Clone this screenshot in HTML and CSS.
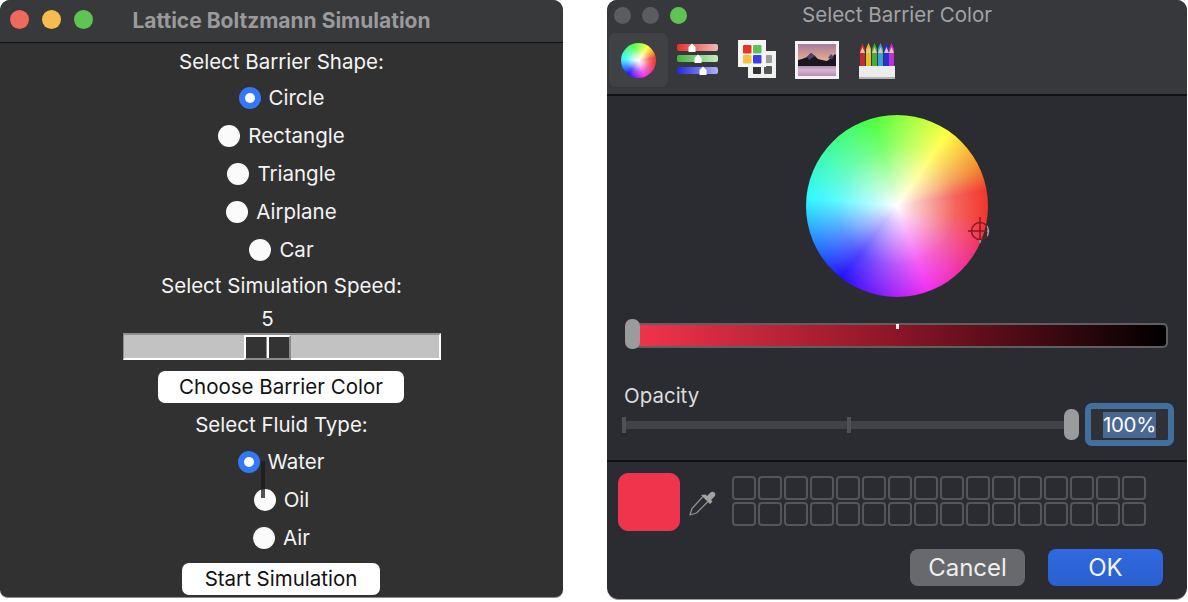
FILE: index.html
```html
<!DOCTYPE html>
<html lang="en">
<head>
<meta charset="utf-8">
<title>Lattice Boltzmann Simulation</title>
<link rel="stylesheet" href="styles.css">
</head>
<body>
<main class="desktop">
  <section class="window sim">
    <header class="sim-title">
      <div class="lights">
        <span class="light red"></span><span class="light yellow"></span><span class="light green"></span>
      </div>
      <h1>Lattice Boltzmann Simulation</h1>
    </header>
    <div class="sim-body">
      <p class="label row-a">Select Barrier Shape:</p>
      <div class="radio"><span class="dot on"></span><span>Circle</span></div>
      <div class="radio"><span class="dot"></span><span>Rectangle</span></div>
      <div class="radio"><span class="dot"></span><span>Triangle</span></div>
      <div class="radio"><span class="dot"></span><span>Airplane</span></div>
      <div class="radio"><span class="dot"></span><span>Car</span></div>
      <p class="label row-b">Select Simulation Speed:</p>
      <p class="value">5</p>
      <div class="scale"><div class="scale-thumb"><span></span><span></span></div></div>
      <button class="tk-btn wide">Choose Barrier Color</button>
      <p class="label row-c">Select Fluid Type:</p>
      <div class="fluid">
        <div class="radio"><span class="dot on"></span><span>Water</span></div>
        <div class="radio"><span class="dot"></span><span>Oil</span></div>
        <div class="radio"><span class="dot"></span><span>Air</span></div>
        <span class="stray"></span>
      </div>
      <button class="tk-btn start">Start Simulation</button>
    </div>
  </section>

  <section class="window picker">
    <header class="pick-head">
      <div class="pick-title">
        <div class="lights small">
          <span class="light gray"></span><span class="light gray"></span><span class="light green"></span>
        </div>
        <h2>Select Barrier Color</h2>
      </div>
      <div class="tools">
        <div class="tool selected"><span class="mini-wheel"></span></div>
        <svg class="ico ico-sliders" width="44" height="34" viewBox="0 0 44 34">
          <defs>
            <linearGradient id="gr" x1="0" x2="1"><stop offset="0" stop-color="#e5302a"/><stop offset="1" stop-color="#f1bcb8"/></linearGradient>
            <linearGradient id="gg" x1="0" x2="1"><stop offset="0" stop-color="#46b13f"/><stop offset="1" stop-color="#c6ecc2"/></linearGradient>
            <linearGradient id="gb" x1="0" x2="1"><stop offset="0" stop-color="#2228e0"/><stop offset="1" stop-color="#b0b3f5"/></linearGradient>
          </defs>
          <rect x="0" y="3" width="41" height="7" rx="2" fill="url(#gr)"/>
          <rect x="0" y="14" width="41" height="7" rx="2" fill="url(#gg)"/>
          <rect x="0" y="26" width="41" height="7" rx="2" fill="url(#gb)"/>
          <path d="M11.500 11V6l3.500-3.500L18.500 6v5zM17.500 22v-5l3.500-3.500 3.500 3.500v5zM22.500 34v-5l3.500-3.500 3.500 3.500v5z" fill="#fff"/>
        </svg>
        <svg class="ico ico-palette" width="40" height="40" viewBox="0 0 40 40">
          <rect x="10" y="12" width="28" height="27" fill="#f1f1f1"/>
          <rect x="26" y="16" width="8" height="8" rx="1" fill="#9c9c9c"/>
          <rect x="15" y="27" width="8" height="8" rx="1" fill="#333"/>
          <rect x="26" y="27" width="8" height="8" rx="1" fill="#555"/>
          <rect x="0" y="1" width="28" height="27" fill="#f6f6f6"/>
          <rect x="5" y="6" width="8.500" height="8.500" rx="1" fill="#ea3327"/>
          <rect x="15" y="6" width="8.500" height="8.500" rx="1" fill="#5cc253"/>
          <rect x="5" y="16" width="8.500" height="8.500" rx="1" fill="#f8c33a"/>
          <rect x="15" y="16" width="8.500" height="8.500" rx="1" fill="#3c3ee8"/>
        </svg>
        <svg class="ico ico-photo" width="44" height="38" viewBox="0 0 44 38">
          <defs>
            <linearGradient id="sky" x1="0" x2="0" y1="0" y2="1"><stop offset="0" stop-color="#a67a9f"/><stop offset="0.55" stop-color="#eab28d"/><stop offset="1" stop-color="#d5a08e"/></linearGradient>
            <linearGradient id="lake" x1="0" x2="0" y1="0" y2="1"><stop offset="0" stop-color="#9a7da4"/><stop offset="0.5" stop-color="#dab6d0"/><stop offset="1" stop-color="#b48fb6"/></linearGradient>
          </defs>
          <rect width="44" height="38" fill="#f3f3f3"/>
          <rect x="3" y="3" width="38" height="32" fill="url(#sky)"/>
          <rect x="3" y="23" width="38" height="12" fill="url(#lake)"/>
          <path d="M3 19l4-1 5-2 4-4 4 3 3 3 4 1 5 1 5-4 3-3 1 1v11H3z" fill="#1a1722"/>
          <path d="M12 16l4-4 4 3-3 2-3 2zM33 17l3-4 3 3-2 2z" fill="#4d4170"/>
        </svg>
        <svg class="ico ico-pencils" width="36" height="36" viewBox="0 0 36 36">
          <path d="M1 24V6l2.500-6L6 6v18z" fill="#c22f2c"/>
          <path d="M7 24V6l2.500-6L12 6v18z" fill="#e0c02c"/>
          <path d="M13 24V6l2.500-6L18 6v18z" fill="#43ad3c"/>
          <path d="M19 24V6l2.500-6L24 6v18z" fill="#3a9fe0"/>
          <path d="M25 24V6l2.500-6L30 6v18z" fill="#2430d8"/>
          <path d="M30 24V6l2.500-6L35 6v18z" fill="#c22fd0"/>
          <path d="M1 10l2.500-6L6 10zM7 10l2.500-6L12 10zM13 10l2.500-6L18 10zM19 10l2.500-6L24 10zM25 10l2.500-6L30 10zM30 10l2.500-6L35 10z" fill="#e3c7a6"/>
          <rect x="0" y="23" width="36" height="13" fill="#ececec"/>
          <rect x="0" y="34" width="36" height="2" fill="#b4b4b4"/>
        </svg>
      </div>
    </header>

    <div class="pick-main">
      <div class="wheel-wrap">
        <div class="wheel">
          <svg class="cross" width="26" height="28" viewBox="0 0 26 28">
            <defs><clipPath id="out"><rect x="19" y="0" width="7" height="28"/><rect x="0" y="23" width="26" height="5"/></clipPath></defs>
            <g fill="none" stroke="#8a1818" stroke-width="1.500">
              <circle cx="12" cy="14" r="8.500"/>
              <path d="M0 14h21M12 0v26"/>
            </g>
            <g fill="none" stroke="#a2a2a2" stroke-width="1.500" clip-path="url(#out)">
              <circle cx="12" cy="14" r="8.500"/>
              <path d="M0 14h21M12 0v26"/>
            </g>
          </svg>
        </div>
      </div>
      <div class="bright">
        <span class="knob bright-knob"></span>
        <span class="bright-mark"></span>
      </div>
      <p class="opacity-label">Opacity</p>
      <div class="opacity-row">
        <div class="opacity-track">
          <span class="tick t0"></span><span class="tick t1"></span>
          <span class="knob opacity-knob"></span>
        </div>
        <div class="opacity-field"><span class="selected-text">100%</span></div>
      </div>
    </div>

    <footer class="pick-foot">
      <div class="foot-top">
        <div class="swatch"></div>
        <svg class="dropper" width="30" height="30" viewBox="0 0 30 30">
          <path d="M15 9.500L4 21.500 2 28l6.500-2L20 14.500" fill="#2b2c31" stroke="#8f8f8f" stroke-width="1.300" stroke-linejoin="round"/>
          <path d="M13 8l9 9 2.500-2.500-1.500-1.500 3.500-3.500c2.500-2.500-1-6.500-4-4L19 9 17.500 7.500z" fill="#a2a2a2"/>
        </svg>
        <div class="wells" id="wells"></div>
      </div>
      <div class="actions">
        <button class="mac-btn cancel">Cancel</button>
        <button class="mac-btn ok">OK</button>
      </div>
    </footer>
  </section>
</main>
<script>
  var wells = document.getElementById('wells');
  for (var i = 0; i < 32; i++) {
    var w = document.createElement('span');
    w.className = 'well';
    wells.appendChild(w);
  }
</script>
</body>
</html>
```
FILE: styles.css
```css
* { box-sizing: border-box; }
html, body { margin: 0; padding: 0; background: #fff; }
body { font-family: Inter, "Liberation Sans", sans-serif; overflow: hidden; }
p, h1, h2 { margin: 0; }

.desktop { display: flex; align-items: flex-start; width: 1188px; height: 602px; gap: 44px; }
.window { overflow: hidden; flex: none; }

.lights { display: flex; gap: 13px; }
.light { width: 19px; height: 19px; border-radius: 50%; display: block; }
.light.red { background: #ee6a5f; }
.light.yellow { background: #f5bd4f; }
.light.green { background: #5fc454; }
.light.gray { background: #5c5c5f; }

/* Simulation window */
.sim {
  width: 563px; height: 598px; background: #313131; color: #f4f4f4;
  border-radius: 10px 10px 8px 8px; border-bottom: 1px solid #8c8c8c;
}
.sim-title {
  height: 43px; background: #38393b; border-bottom: 1px solid #0e0e0e;
  display: flex; align-items: center; justify-content: center; position: relative;
}
.sim-title .lights { position: absolute; left: 10px; top: 10px; }
.sim-title h1 { font-size: 21px; font-weight: 700; color: #9a9a9c; line-height: 24px; margin-top: -1px; }
.sim-body { display: flex; flex-direction: column; align-items: center; font-size: 20.5px; }
.label, .value, .radio { line-height: 24px; }
.row-a { margin-top: 7px; }
.radio { height: 38px; display: flex; align-items: center; gap: 8px; }
.sim-body > .radio:first-of-type { margin-top: 5px; }
.dot { width: 22px; height: 22px; border-radius: 50%; background: #fbfbfb; display: block; flex: none; }
.dot.on { background: #3478f6; position: relative; }
.dot.on::after { content: ""; position: absolute; left: 6px; top: 6px; width: 10px; height: 10px; border-radius: 50%; background: #fff; }
.row-b { margin-top: 5px; }
.value { margin-top: 9px; margin-left: -28px; }
.scale {
  width: 318px; height: 27px; margin-top: 2px; background: #c2c2c2; position: relative;
  border-top: 2px solid #8e8e8e; border-left: 1px solid #8e8e8e;
  border-right: 2px solid #fff; border-bottom: 2px solid #fff;
}
.scale-thumb {
  position: absolute; left: 120px; top: 0; width: 47px; height: 25px;
  display: flex; background: #8a8a8a;
  border-top: 2px solid #fff; border-left: 2px solid #fff; border-right: 2px solid #8a8a8a; border-bottom: 2px solid #8a8a8a;
}
.scale-thumb span { flex: 1; background: #333; }
.scale-thumb span:first-child { border-right: 1px solid #8a8a8a; }
.scale-thumb span:last-child { border-left: 2px solid #fff; }
.tk-btn {
  display: block; height: 32px; border: 0; border-radius: 7px; background: #fff; color: #111;
  font: inherit; font-size: 20.5px; padding: 0 0 2px; text-align: center;
}
.tk-btn.wide { width: 246px; margin-top: 11px; margin-left: -1px; }
.row-c { margin-top: 10px; }
.fluid { display: flex; flex-direction: column; align-items: center; margin-top: 6px; position: relative; }
.stray { position: absolute; left: 50%; top: 18px; width: 4px; height: 37px; margin-left: -20px; background: rgba(25,25,25,.75); }
.fluid .radio:nth-child(1) { margin-left: -1px; }
.tk-btn.start { width: 198px; margin-top: 6px; margin-left: -1px; }

/* Picker window */
.picker {
  width: 580px; height: 600px; background: #2b2c31; color: #e6e6e6;
  border-radius: 10px 10px 12px 12px; border-bottom: 1px solid #9a9a9a;
}
.pick-head { height: 96px; background: #37383c; border-bottom: 2px solid #111; }
.pick-title { height: 30px; display: flex; align-items: center; justify-content: center; position: relative; }
.lights.small { position: absolute; left: 7px; top: 7px; gap: 11px; }
.lights.small .light { width: 17px; height: 17px; }
.pick-title h2 { font-size: 20.5px; font-weight: 400; color: #a3a3a5; line-height: 24px; }
.tools { display: flex; align-items: flex-start; height: 56px; padding: 3px 0 0 2px; position: relative; }
.tool.selected { width: 59px; height: 54px; border-radius: 7px; background: #404145; display: flex; align-items: center; justify-content: center; }
.mini-wheel {
  width: 35px; height: 35px; border-radius: 50%; display: block;
  background:
    radial-gradient(circle, #fff 0%, rgba(255,255,255,.75) 18%, rgba(255,255,255,.28) 46%, rgba(255,255,255,0) 78%),
    conic-gradient(from 90deg, #f0281e 8deg, #f020f0 70deg, #1000ff 128deg, #20f8ff 185deg, #40ff30 255deg, #ffff30 305deg, #f08020 335deg, #f0281e 350deg);
}
.ico { position: absolute; }
.ico-sliders { left: 70px; top: 11px; }
.ico-palette { left: 131px; top: 9px; }
.ico-photo { left: 188px; top: 11px; }
.ico-pencils { left: 252px; top: 13px; }

.pick-main { height: 366px; border-bottom: 2px solid #111; padding-top: 1px; }
.wheel-wrap { display: flex; justify-content: center; margin-top: 18px; }
.wheel {
  width: 182px; height: 182px; border-radius: 50%; position: relative;
  background:
    radial-gradient(circle, #fff 0%, rgba(255,255,255,.75) 14%, rgba(255,255,255,.28) 46%, rgba(255,255,255,0) 78%),
    conic-gradient(from 90deg, #f0281e 8deg, #f020f0 70deg, #1000ff 128deg, #20f8ff 185deg, #40ff30 255deg, #ffff30 305deg, #f08020 335deg, #f0281e 350deg);
}
.cross { position: absolute; left: 162px; top: 102px; }
.bright {
  height: 25px; margin: 26px 19px 0 25px; border: 2px solid #5f5f62; border-radius: 5px; position: relative;
  background: linear-gradient(to right, #f2344d 0%, #8a1526 50%, #000 100%);
}
.knob { position: absolute; display: block; width: 15px; border-radius: 7px; background: #9b9b9d; }
.bright-knob { left: -9px; top: -6px; height: 30px; }
.bright-mark { position: absolute; left: 262px; top: -1px; width: 3px; height: 5px; background: #f3e8ea; }
.opacity-label { font-size: 20.5px; line-height: 24px; margin: 36px 0 0 17px; color: #dcdcdc; }
.opacity-row { display: flex; align-items: center; margin: -5px 0 0 15px; gap: 8px; }
.opacity-track { width: 455px; height: 8px; background: #424347; position: relative; }
.tick { position: absolute; top: -4px; width: 4px; height: 16px; background: #505155; }
.t0 { left: 0; }
.t1 { left: 225px; }
.opacity-knob { right: -2px; top: -12px; height: 31px; }
.opacity-field {
  width: 89px; height: 43px; border: 6px solid #41709f; border-radius: 7px; background: #303136;
  display: flex; align-items: center; justify-content: center;
}
.selected-text { background: #4a6794; color: #fff; font-size: 20.5px; line-height: 26px; padding: 0; letter-spacing: -0.3px; }

.pick-foot { padding: 11px 0 0 11px; }
.foot-top { display: flex; align-items: flex-start; height: 76px; }
.swatch { width: 62px; height: 58px; border-radius: 10px; background: #ef344b; border: 1px solid #e83560; flex: none; }
.dropper { margin: 14px 0 0 8px; flex: none; }
.wells { display: grid; grid-template-columns: repeat(16, 24px); grid-auto-rows: 24px; gap: 2px; margin: 3px 0 0 14px; }
.well { display: block; border: 2px solid #55565a; border-radius: 4px; }
.actions { display: flex; justify-content: flex-end; gap: 23px; padding-right: 24px; }
.mac-btn { width: 115px; height: 37px; border: 0; border-radius: 8px; font: inherit; font-size: 24px; color: #eee; padding: 0; }
.cancel { background: #68696c; }
.ok { background: linear-gradient(#3069e0, #2a5fcf); color: #f5f5f5; }
```
